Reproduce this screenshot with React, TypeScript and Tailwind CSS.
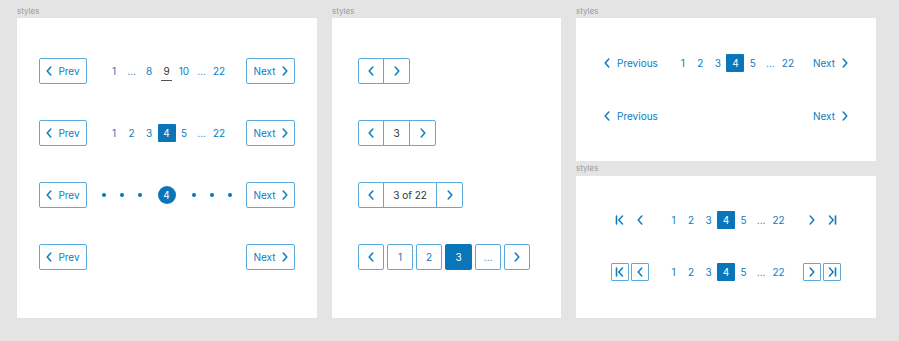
import React from 'react';

const blue = 'text-[#0e7cc0]';

const ChevronLeft: React.FC<{ className?: string }> = ({ className = '' }) => (
  <svg viewBox="0 0 6 10" className={`w-[6px] h-[10px] ${className}`} fill="none">
    <path d="M4.8 1 L1.2 5 L4.8 9" stroke="currentColor" strokeWidth="1.5" strokeLinecap="round" strokeLinejoin="round" />
  </svg>
);

const ChevronRight: React.FC<{ className?: string }> = ({ className = '' }) => (
  <svg viewBox="0 0 6 10" className={`w-[6px] h-[10px] ${className}`} fill="none">
    <path d="M1.2 1 L4.8 5 L1.2 9" stroke="currentColor" strokeWidth="1.5" strokeLinecap="round" strokeLinejoin="round" />
  </svg>
);

const FirstIcon: React.FC = () => (
  <svg viewBox="0 0 10 10" className="w-[10px] h-[10px]" fill="none">
    <path d="M1.5 1 L1.5 9" stroke="currentColor" strokeWidth="1.6" strokeLinecap="round" />
    <path d="M7.5 1 L3.8 5 L7.5 9" stroke="currentColor" strokeWidth="1.5" strokeLinecap="round" strokeLinejoin="round" />
  </svg>
);

const LastIcon: React.FC = () => (
  <svg viewBox="0 0 10 10" className="w-[10px] h-[10px]" fill="none">
    <path d="M2.5 1 L6.2 5 L2.5 9" stroke="currentColor" strokeWidth="1.5" strokeLinecap="round" strokeLinejoin="round" />
    <path d="M8.5 1 L8.5 9" stroke="currentColor" strokeWidth="1.6" strokeLinecap="round" />
  </svg>
);

const Label: React.FC<{ h?: string }> = ({ h = 'h-[13px] leading-[13px]' }) => (
  <div className={`${h} text-[8px] text-[#9b9b9b]`}>styles</div>
);

const PrevBtn = () => (
  <div className={`w-[48px] h-[26px] border border-[#5aaadb] rounded-[2px] flex items-center justify-center gap-[6px] ${blue}`}>
    <ChevronLeft />
    <span>Prev</span>
  </div>
);

const NextBtn = () => (
  <div className={`w-[49px] h-[26px] border border-[#5aaadb] rounded-[2px] flex items-center justify-center gap-[6px] ${blue}`}>
    <span>Next</span>
    <ChevronRight />
  </div>
);

// page list items; "*" marks the active page
const Pages: React.FC<{ items: string[]; underline?: string }> = ({ items, underline }) => (
  <div className="flex items-center">
    {items.map((p, i) =>
      p.startsWith('*') ? (
        <div key={i} className="w-[17.5px] flex justify-center">
          <div className="w-[18px] h-[18px] bg-[#0a76b9] rounded-[1px] text-white flex items-center justify-center shrink-0">
            {p.slice(1)}
          </div>
        </div>
      ) : p === underline ? (
        <div key={i} className="w-[17.5px] h-[18px] flex justify-center items-center relative text-[#333]">
          {p}
          <span className="absolute left-[3px] right-[3px] bottom-[-1px] h-[1px] bg-[#555]" />
        </div>
      ) : (
        <div key={i} className={`w-[17.5px] h-[18px] flex justify-center items-center ${blue}`}>
          {p}
        </div>
      )
    )}
  </div>
);

const Dot = () => (
  <div className="w-[18px] flex justify-center">
    <div className="w-[4px] h-[4px] rounded-full bg-[#0a76b9]" />
  </div>
);

const Cell: React.FC<{ children: React.ReactNode; className?: string }> = ({ children, className = '' }) => (
  <div className={`flex items-center justify-center ${className}`}>{children}</div>
);

const SmallBox: React.FC<{ children: React.ReactNode; bordered?: boolean }> = ({ children, bordered }) => (
  <div
    className={`w-[18px] h-[18px] flex items-center justify-center rounded-[1px] ${blue} ${
      bordered ? 'border border-[#5aaadb]' : ''
    }`}
  >
    {children}
  </div>
);

const numbers = ['1', '2', '3', '*4', '5', '…', '22'];

export default function App() {
  return (
    <div
      className="w-[899px] h-[341px] bg-[#e4e4e4] flex gap-[15px] pl-[17px] pt-[5px] text-[10px]"
      style={{ fontFamily: 'Inter, "Liberation Sans", sans-serif' }}
    >
      {/* column 1: prev / next with page lists */}
      <div className="flex flex-col">
        <Label />
        <div className="w-[300px] h-[300px] bg-white flex flex-col gap-[36px] px-[22px] pt-[40px]">
          <div className="flex items-center justify-between">
            <PrevBtn />
            <Pages items={['1', '…', '8', '9', '10', '…', '22']} underline="9" />
            <NextBtn />
          </div>
          <div className="flex items-center justify-between">
            <PrevBtn />
            <Pages items={numbers} />
            <NextBtn />
          </div>
          <div className="flex items-center justify-between">
            <PrevBtn />
            <div className="flex items-center">
              <Dot />
              <Dot />
              <Dot />
              <div className="mx-[9px] w-[18px] h-[18px] rounded-full bg-[#0a76b9] text-white flex items-center justify-center">
                4
              </div>
              <Dot />
              <Dot />
              <Dot />
            </div>
            <NextBtn />
          </div>
          <div className="flex items-center justify-between">
            <PrevBtn />
            <NextBtn />
          </div>
        </div>
      </div>

      {/* column 2: grouped buttons */}
      <div className="flex flex-col">
        <Label />
        <div className="w-[229px] h-[300px] bg-white flex flex-col gap-[36px] pl-[26px] pt-[40px]">
          <div className={`flex self-start border border-[#5aaadb] rounded-[2px] ${blue}`}>
            <Cell className="w-[25px] h-[24px] border-r border-[#5aaadb]">
              <ChevronLeft />
            </Cell>
            <Cell className="w-[25px] h-[24px]">
              <ChevronRight />
            </Cell>
          </div>
          <div className={`flex self-start border border-[#5aaadb] rounded-[2px] ${blue}`}>
            <Cell className="w-[25px] h-[24px] border-r border-[#5aaadb]">
              <ChevronLeft />
            </Cell>
            <Cell className="w-[26px] h-[24px] border-r border-[#5aaadb] text-[#333]">3</Cell>
            <Cell className="w-[25px] h-[24px]">
              <ChevronRight />
            </Cell>
          </div>
          <div className={`flex self-start border border-[#5aaadb] rounded-[2px] ${blue}`}>
            <Cell className="w-[25px] h-[24px] border-r border-[#5aaadb]">
              <ChevronLeft />
            </Cell>
            <Cell className="w-[53px] h-[24px] border-r border-[#5aaadb] text-[#333]">3 of 22</Cell>
            <Cell className="w-[25px] h-[24px]">
              <ChevronRight />
            </Cell>
          </div>
          <div className={`flex gap-[3px] ${blue}`}>
            <Cell className="w-[26px] h-[26px] border border-[#5aaadb] rounded-[2px]">
              <ChevronLeft />
            </Cell>
            <Cell className="w-[26px] h-[26px] border border-[#5aaadb] rounded-[2px]">1</Cell>
            <Cell className="w-[26px] h-[26px] border border-[#5aaadb] rounded-[2px]">2</Cell>
            <Cell className="w-[27px] h-[26px] bg-[#0a76b9] text-white rounded-[2px]">3</Cell>
            <Cell className="w-[26px] h-[26px] border border-[#5aaadb] rounded-[2px]">…</Cell>
            <Cell className="w-[26px] h-[26px] border border-[#5aaadb] rounded-[2px]">
              <ChevronRight />
            </Cell>
          </div>
        </div>
      </div>

      {/* column 3: text links and first/last controls */}
      <div className="flex flex-col">
        <Label />
        <div className="w-[300px] h-[143px] bg-white flex flex-col gap-[35px] px-[28px] pt-[36px]">
          <div className={`flex items-center justify-between h-[18px] ${blue}`}>
            <div className="flex items-center gap-[7px]">
              <ChevronLeft />
              <span>Previous</span>
            </div>
            <Pages items={numbers} />
            <div className="flex items-center gap-[7px]">
              <span>Next</span>
              <ChevronRight />
            </div>
          </div>
          <div className={`flex items-center justify-between h-[18px] ${blue}`}>
            <div className="flex items-center gap-[7px]">
              <ChevronLeft />
              <span>Previous</span>
            </div>
            <div className="flex items-center gap-[7px]">
              <span>Next</span>
              <ChevronRight />
            </div>
          </div>
        </div>
        <Label h="h-[15px] leading-[15px]" />
        <div className="w-[300px] h-[142px] bg-white flex flex-col gap-[34px] px-[35px] pt-[35px]">
          {[false, true].map((bordered) => (
            <div key={String(bordered)} className="flex items-center justify-between h-[18px]">
              <div className="flex gap-[2px]">
                <SmallBox bordered={bordered}>
                  <FirstIcon />
                </SmallBox>
                <SmallBox bordered={bordered}>
                  <ChevronLeft />
                </SmallBox>
              </div>
              <Pages items={numbers} />
              <div className="flex gap-[2px]">
                <SmallBox bordered={bordered}>
                  <ChevronRight />
                </SmallBox>
                <SmallBox bordered={bordered}>
                  <LastIcon />
                </SmallBox>
              </div>
            </div>
          ))}
        </div>
      </div>
    </div>
  );
}
